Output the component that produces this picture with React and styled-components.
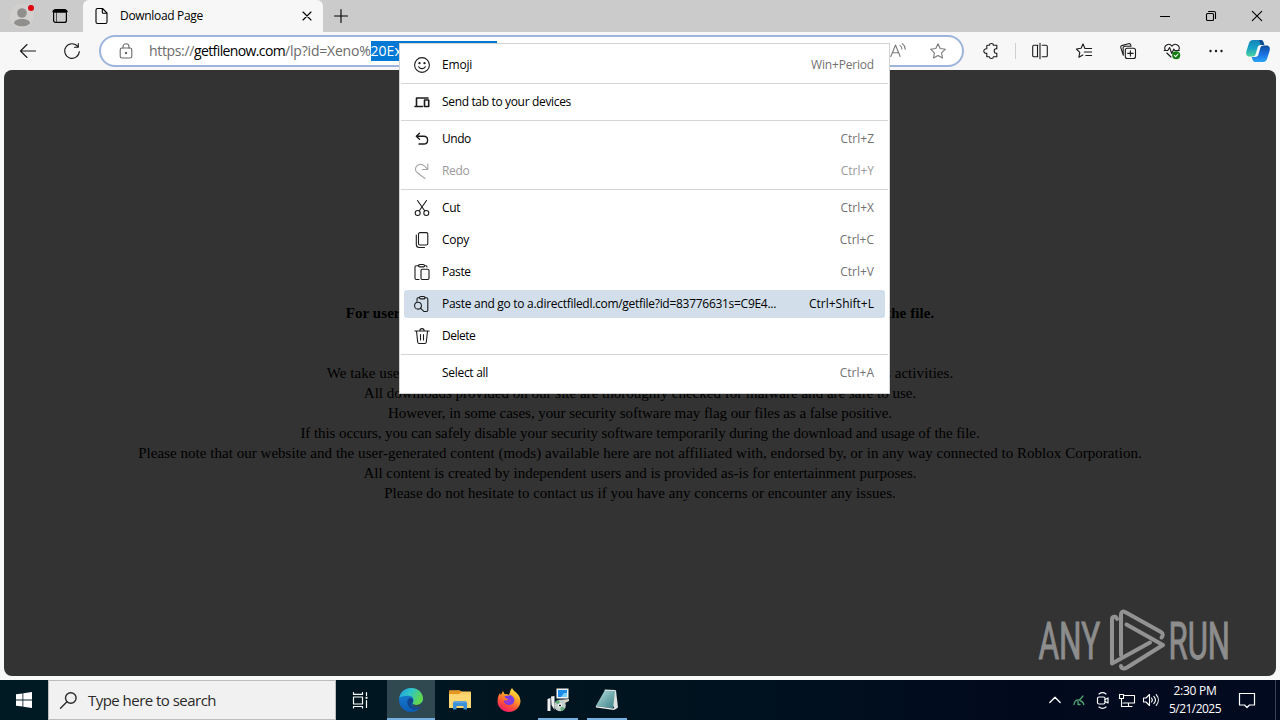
import React from 'react';
import styled, { createGlobalStyle, css } from 'styled-components';

const GlobalStyle = createGlobalStyle`
  * { box-sizing: border-box; }
  body {
    margin: 0;
    width: 1280px;
    height: 720px;
    overflow: hidden;
    font-family: "Open Sans", "Noto Sans", sans-serif;
    font-size: 12px;
    color: #000;
  }
`;

const Desktop = styled.div`
  display: flex;
  flex-direction: column;
  width: 1280px;
  height: 720px;
  background: #f7f8f8;
  overflow: hidden;
  position: relative;
`;

/* ---------- icons ---------- */
const Svg = styled.svg`
  display: block;
  flex: none;
  fill: none;
  stroke: currentColor;
  stroke-width: ${p => p.$w || 1.1};
  stroke-linecap: round;
  stroke-linejoin: round;
  overflow: visible;
`;

const Icon = ({ size = 16, w, children }) => (
  <Svg width={size} height={size} viewBox={`0 0 ${size} ${size}`} $w={w}>{children}</Svg>
);

const ProfileIcon = () => (
  <Svg width="24" height="24" viewBox="0 0 24 24" stroke="none">
    <circle cx="12" cy="12" r="12" fill="#d2d0ce" stroke="none" />
    <circle cx="12" cy="9" r="4.8" fill="#918f8d" stroke="none" />
    <path d="M4 19.500c0-3 3-4.500 8-4.500s8 1.500 8 4.500c-2 2.200-5 2.800-8 2.800s-6-.6-8-2.800z" fill="#918f8d" stroke="none" />
    <circle cx="21" cy="4" r="3" fill="#e0000f" stroke="none" />
  </Svg>
);
const TabActionsIcon = () => (
  <Icon size={14} w={1.2}>
    <rect x=".6" y=".6" width="12.800" height="12.800" rx="2" />
    <path d="M1 2.300h12" strokeWidth="3" />
    <path d="M3.500 4v9" strokeWidth="1" opacity=".6" />
  </Icon>
);
const PageIcon = () => (
  <Icon size={16}>
    <path d="M3.500.5h5l4.500 4.500v9c0 .8-.5 1.500-1.500 1.500h-8C2.500 15.500 2 15 2 14V2C2 1 2.500.5 3.500.5zM8.300.8v3.400c0 .7.400 1 1 1h3.500" />
  </Icon>
);
const BackIcon = () => <Icon><path d="M15.500 8H.5M7 1.500L.5 8 7 14.500" /></Icon>;
const ReloadIcon = () => <Icon><path d="M13.800 3.600A7.300 7.300 0 1 0 15.300 8.500M14.300.6v3.600h-3.800" /></Icon>;
const LockIcon = () => (
  <Icon><rect x="2.200" y="5" width="11.600" height="10" rx="1.800" /><path d="M5 5V3.800a3 3 0 0 1 6 0V5" /><circle cx="8" cy="10" r=".7" fill="currentColor" /></Icon>
);
const ReadAloudIcon = () => (
  <Icon><path d="M.8 13.500L5.500 2l4.700 11.500M2.300 9.800h6.400M10 2.400c1.200.8 1.800 2 1.900 3.500M12.300.6c1.900 1.300 2.800 3.300 2.900 5.700" /></Icon>
);
const StarIcon = () => (
  <Icon><path d="M8 .8l2.200 4.700 5.200.7-3.800 3.600.9 5.200L8 12.500 3.500 15l.9-5.200L.6 6.200l5.200-.7z" /></Icon>
);
const ExtensionIcon = () => (
  <Icon><path d="M4.500 2.300h1.900c0-2.500 4-2.500 4 0h3.400v3.500h-.8c-2.400 0-2.400 4.400 0 4.400h.8v3.500h-3.400c0 2.400-4 2.400-4 0H3.800v-3.300c-4 .3-4-5 0-4.700V3c0-.5.3-.7.700-.7z" /></Icon>
);
const SplitIcon = () => (
  <Icon><path d="M5.800 2.200H2c-.8 0-1.300.5-1.300 1.300v9c0 .8.500 1.300 1.300 1.300h3.800M10.200 2.200H14c.8 0 1.300.5 1.300 1.300v9c0 .8-.5 1.300-1.300 1.300h-3.800M8 .3v15.400M5.500 2.200v11.600" /></Icon>
);
const FavoritesIcon = () => (
  <Icon><path d="M8.900 5.500L7 .9 5.100 5.300.4 6l3.400 3.400-.9 4.800L6.800 12M8.900 5.500H15.600M8.300 9h7.300M9.800 12.500h5.800" /></Icon>
);
const CollectionsIcon = () => (
  <Icon><rect x="5.300" y="5.300" width="10.200" height="10.200" rx="2" /><path d="M10.400 7.700v5.400M7.700 10.400h5.400M3.300 12.300L.8 4.700c-.3-1 .1-1.800 1-2.100L8.500.7c1-.3 1.800.1 2.100 1L11 3.200H5.200C3.800 3.200 3.100 4 3.100 5.200z" /></Icon>
);
const HealthIcon = () => (
  <Icon>
    <path d="M1.200 7C-.8 2.500 5-.8 8 3.200 11-.8 16.800 2.500 14.800 7M2.800 10L7 14M.2 7.500h3.600l1.800-3 2.200 6 2-4.500 1 1.500h4.500" />
    <circle cx="12.200" cy="12.200" r="4" fill="#107c10" stroke="none" />
    <path d="M10.300 12.300l1.400 1.300 2.400-2.600" stroke="#fff" />
  </Icon>
);
const DotsIcon = () => (
  <Icon><g fill="currentColor" stroke="none"><circle cx="2.500" cy="8" r="1.200" /><circle cx="8" cy="8" r="1.200" /><circle cx="13.500" cy="8" r="1.200" /></g></Icon>
);
const CopilotIcon = () => (
  <Svg width="24" height="24" viewBox="0 0 24 24">
    <defs>
      <linearGradient id="cpA" x1="0" y1="0" x2="0" y2="1"><stop offset="0" stopColor="#1384b8" /><stop offset=".5" stopColor="#17a2c8" /><stop offset="1" stopColor="#4fd39a" /></linearGradient>
      <linearGradient id="cpB" x1="0" y1="0" x2="0" y2="1"><stop offset="0" stopColor="#0e4e9c" /><stop offset=".5" stopColor="#1b6fe0" /><stop offset="1" stopColor="#29a5f7" /></linearGradient>
    </defs>
    <path d="M7 1h8c1.500 0 2 1 2.500 2.500l.8 2.500h-3.500c-2 0-2.800 1-3.300 2.700L9.700 15C9.200 16.800 8 17.500 6.300 17.500H3.500C.5 17.500-.3 15 .3 12.500L3 4C3.700 2 5 1 7 1z" fill="url(#cpA)" stroke="none" />
    <path d="M17 23H9c-1.500 0-2-1-2.500-2.500L5.700 18h3.500c2 0 2.800-1 3.300-2.700L14.300 9c.5-1.800 1.700-2.500 3.400-2.500h2.800c3 0 3.800 2.500 3.200 5L21 20c-.7 2-2 3-4 3z" fill="url(#cpB)" stroke="none" />
    <path d="M13 1h2c1.500 0 2 1 2.500 2.500l.8 2.500h-3.500z" fill="#0d4a91" stroke="none" />
  </Svg>
);

/* ---------- title bar ---------- */
const TitleBar = styled.header`
  display: flex;
  height: 32px;
  background: #cbcbcb;
`;
const TitleCell = styled.div`
  display: flex;
  align-items: center;
  justify-content: center;
  width: ${p => p.$width}px;
`;
const Tab = styled.div`
  display: flex;
  align-items: center;
  width: 240px;
  padding: 0 9px 0 11px;
  background: #f7f7f7;
  border-radius: 6px 6px 0 0;
`;
const TabTitle = styled.span`
  flex: 1;
  padding-left: 10px;
  line-height: 16px;
  letter-spacing: -0.32px;
`;
const Spacer = styled.div`flex: 1;`;

/* ---------- toolbar ---------- */
const Toolbar = styled.div`
  display: flex;
  align-items: center;
  height: 38px;
  padding-left: 6px;
  background: #f7f7f7;
`;
const ToolCell = styled.div`
  display: flex;
  align-items: center;
  justify-content: center;
  width: ${p => p.$width || 44}px;
  height: 32px;
  color: #1b1b1b;
`;
const ToolDivider = styled.div`
  width: 1px;
  height: 16px;
  margin: 0 2px;
  background: #cfcfcf;
`;
const AddressBar = styled.div`
  display: flex;
  align-items: center;
  width: 865px;
  height: 32px;
  margin-left: 5px;
  border: 2px solid #9db4dc;
  border-radius: 16px;
  background: #fff;
  color: #6b6b6b;
`;
const AddressIcon = styled.div`
  display: flex;
  justify-content: center;
  width: ${p => p.$width}px;
  padding-left: ${p => p.$inset || 0}px;
  color: ${p => p.$color};
`;
const Url = styled.div`
  flex: 1;
  display: flex;
  font-size: 14px;
  line-height: 20px;
  white-space: pre;
`;
const UrlPart = styled.span`
  letter-spacing: ${p => p.$ls}px;
  color: ${p => p.$strong ? '#000' : '#6b6b6b'};
`;
const UrlSelection = styled.span`
  width: 126px;
  overflow: hidden;
  background: #0078d4;
  color: #fff;
`;

/* ---------- web page ---------- */
const Page = styled.main`
  display: flex;
  flex-direction: column;
  align-items: center;
  height: 606px;
  margin: 0 4px;
  padding-top: 233px;
  border-radius: 8px;
  background: #333;
  font-family: "Liberation Serif", "Times New Roman", serif;
  font-size: 15px;
  line-height: 20px;
  white-space: nowrap;
  position: relative;
`;
const Heading = styled.h3`
  margin: 0 0 40px;
  font-size: 15px;
  line-height: 20px;
  letter-spacing: ${p => p.$ls}px;
`;
const Line = styled.p`
  margin: 0;
  letter-spacing: ${p => p.$ls}px;
`;
const Watermark = styled.svg`
  position: absolute;
  left: 1030px;
  top: 536px;
  fill: none;
`;

/* ---------- context menu ---------- */
const Menu = styled.div`
  display: flex;
  flex-direction: column;
  position: absolute;
  left: 399px;
  top: 43px;
  width: 491px;
  height: 351px;
  padding-top: 5px;
  border: 1px solid #d2d2d2;
  background: #fff;
`;
const Separator = styled.div`
  height: 1px;
  margin: 2px 1px;
  background: #d5d5d5;
`;
const MenuItem = styled.div`
  display: flex;
  align-items: center;
  height: 28px;
  margin: 2px 4px;
  padding: 0 11px 0 10px;
  border-radius: 3px;
  color: ${p => (p.$disabled ? '#9a9a9a' : '#000')};
  ${p => p.$active && css`background: #d2dfeb;`}
`;
const MenuIcon = styled.span`
  width: 16px;
  height: 16px;
  margin-right: 12px;
  color: ${p => (p.$disabled ? '#a6a6a6' : '#1c1c1c')};
`;
const MenuLabel = styled.span`
  flex: 1;
  line-height: 16px;
  letter-spacing: ${p => p.$ls || -0.3}px;
  white-space: nowrap;
`;
const Shortcut = styled.span`
  line-height: 16px;
  letter-spacing: ${p => p.$ls || 0}px;
  color: ${p => (p.$active ? '#000' : p.$disabled ? '#9a9a9a' : '#717171')};
`;

const menuGroups = [
  [{ label: 'Emoji', keys: 'Win+Period', kls: -0.18, ls: -0.2, icon: <Icon><circle cx="8" cy="8" r="7.400" /><path d="M4.700 9.700c1.500 2.600 5.100 2.600 6.600 0" /><circle cx="5.500" cy="6.200" r=".6" fill="currentColor" /><circle cx="10.500" cy="6.200" r=".6" fill="currentColor" /></Icon> }],
  [{ label: 'Send tab to your devices', ls: -0.34, icon: <Icon w={1.6}><path d="M2.500 11.500V4h11.500M1 12.500h7.500M10.500 6h4.200v6.500h-4.200z" /></Icon> }],
  [
    { label: 'Undo', keys: 'Ctrl+Z', ls: -0.45, icon: <Icon w={1.4}><path d="M5.500 2.300L2.300 5.300l3.200 3M2.500 5.300h7.200c5.200 0 5.200 7.700 0 7.700H5" /></Icon> },
    { label: 'Redo', keys: 'Ctrl+Y', disabled: true, icon: <Icon><path d="M13.800 1v5.500H8.300M13.500 6.200C10.500 2.500 6.500-.5 3 2.700 0 6 1.800 8.500 4 10.200l7 5.300" /></Icon> },
  ],
  [
    { label: 'Cut', keys: 'Ctrl+X', icon: <Icon><circle cx="3.700" cy="13" r="2.500" /><circle cx="12.300" cy="13" r="2.500" /><path d="M3.500.5l7.200 10.300M12.500.5l-7.200 10.300" /></Icon> },
    { label: 'Copy', keys: 'Ctrl+C', icon: <Icon><rect x="4.500" y=".6" width="9.300" height="12.400" rx="1.500" /><path d="M2.300 3v9.500c0 2 1 3 3 3h5.200" /></Icon> },
    { label: 'Paste', keys: 'Ctrl+V', ls: -0.4, icon: <Icon><path d="M5 1.800H2.200C1.400 1.800 1 2.300 1 3v11.300c0 .8.500 1.200 1.200 1.200H5M10.500 1.800H12c.7 0 1 .5 1 1.200" /><rect x="4.500" y=".5" width="6" height="2.400" rx="1.200" /><rect x="7" y="5.300" width="8" height="10.200" rx="1.200" /></Icon> },
    { label: 'Paste and go to a.directfiledl.com/getfile?id=83776631s=C9E4...', keys: 'Ctrl+Shift+L', active: true, ls: -0.286, icon: <Icon><path d="M5.500 1.800H4C3.300 1.800 3 2.300 3 3v2.300M10.500 1.800H12.500c.8 0 1.300.5 1.300 1.200v11.300c0 .8-.5 1.200-1.300 1.200H10" /><rect x="5.500" y=".5" width="5.500" height="2.400" rx="1.200" /><circle cx="4" cy="9.700" r="3.400" /><path d="M6.500 12.200l3 3" /></Icon> },
    { label: 'Delete', ls: -0.5, icon: <Icon><path d="M.8 3h14.400M2.500 3l1.200 11c.1 1 .7 1.500 1.500 1.500h5.600c.8 0 1.400-.5 1.500-1.500l1.200-11M5.800 3c0-3.200 4.400-3.200 4.400 0M6.500 6.500v5.500M9.500 6.500v5.500" /></Icon> },
  ],
  [{ label: 'Select all', keys: 'Ctrl+A' , icon: null }],
];

/* ---------- taskbar ---------- */
const Taskbar = styled.footer`
  display: flex;
  height: 40px;
  margin-top: 4px;
  background: linear-gradient(90deg, #001a23 0%, #00141f 50%, #010a1d 80%, #020a20 100%);
  color: #fff;
`;
const TaskCell = styled.div`
  display: flex;
  align-items: center;
  justify-content: center;
  width: ${p => p.$width}px;
  height: 40px;
`;
const TaskView = styled(TaskCell)`
  margin-right: 4px;
`;
const AppCell = styled(TaskCell)`
  width: 48px;
  margin-right: 1px;
  background: ${p => (p.$active ? '#30484f' : 'none')};
  flex-direction: column;
  justify-content: flex-end;
`;
const AppArt = styled.div`
  flex: 1;
  display: flex;
  align-items: center;
  padding-top: ${p => (p.$idle ? 0 : 2)}px;
`;
const RunningBar = styled.div`
  height: 2px;
  width: ${p => (p.$active ? 48 : 40)}px;
  background: #76b0e0;
`;
const SearchBox = styled.div`
  display: flex;
  align-items: center;
  width: 288px;
  border: 1px solid #bdbdbd;
  background: #f1f1f1;
  padding-left: 11px;
  color: #2a2a2a;
`;
const SearchText = styled.span`
  margin-left: 11px;
  font-size: 15px;
  line-height: 20px;
  letter-spacing: -0.53px;
`;
const Clock = styled.div`
  width: 64px;
  display: flex;
  flex-direction: column;
  align-items: center;
  padding-top: 2px;
  line-height: 18px;
`;
const ClockText = styled.span`letter-spacing: ${p => p.$ls}px;`;
const TrayEdge = styled.div`
  width: 1px;
  margin: 0 4px 0 8px;
  background: #3a4258;
`;

const WindowsLogo = () => (
  <Svg width="16" height="16" viewBox="0 0 16 16"><path d="M0 2.300L6.500 1.400v6.200H0zM7.300 1.300L16 0v7.600H7.300zM0 8.400h6.500v6.200L0 13.700zM7.300 8.400H16V16l-8.700-1.300z" fill="#fff" stroke="none" /></Svg>
);
const EdgeLogo = () => (
  <Svg width="24" height="24" viewBox="0 0 24 24">
    <defs>
      <linearGradient id="eg1" x1="0" y1="0" x2="1" y2=".4"><stop offset="0" stopColor="#1c9fe0" /><stop offset=".5" stopColor="#2fc5c6" /><stop offset="1" stopColor="#62d84d" /></linearGradient>
      <linearGradient id="eg2" x1="0" y1="0" x2="0" y2="1"><stop offset="0" stopColor="#1a86d4" /><stop offset="1" stopColor="#0c5cb5" /></linearGradient>
    </defs>
    <g stroke="none">
      <circle cx="12" cy="12" r="12" fill="url(#eg2)" />
      <path d="M.3 10C1.500 3.500 6.500 0 12 0c7 0 12 4.800 12 10.500 0 4-3 6.500-6.700 6.500-3 0-4.300-1.400-3.500-2.600 1.700-2.500.5-6.700-4.300-6.700C5.500 7.700 1.500 8.500.3 10z" fill="url(#eg1)" />
      <path d="M9 11c-2.500 5 1.500 11.500 8.500 10.600 2-.4 3.500-1.600 4.600-3-7 3.200-12.500-1.600-8.300-4.200C15 12 13 8 9 11z" fill="#12478f" />
      <path d="M13.800 14.400c-.8 1.200.5 2.600 3.500 2.600 2.700 0 5-1.300 6-3.500l1 1c-.3 1.500-.8 2.900-2 4.100-4.500 2-10.700.5-8.500-4.200z" fill="#30484f" />
    </g>
  </Svg>
);
const ExplorerLogo = () => (
  <Svg width="22" height="20" viewBox="0 0 22 20">
    <g stroke="none">
      <path d="M0 1.500C0 1 .5.5 1 .5h9.500l2 1H21c.6 0 1 .4 1 1V18H0z" fill="#fbd065" />
      <path d="M0 1.500C0 1 .5.5 1 .5h9.500l2 1-2 2.500H0z" fill="#e59622" />
      <path d="M0 4.500h22v13.500H0z" fill="#fcd772" />
      <path d="M4 19.500v-6c0-1.500 1-2.500 2.500-2.500h9c1.500 0 2.500 1 2.500 2.500v6h-3.500V16h-7v3.500z" fill="#3b8fd4" />
      <path d="M5.500 11h11l1.500 2H4z" fill="#5aa3dc" />
    </g>
  </Svg>
);
const FirefoxLogo = () => (
  <Svg width="24" height="24" viewBox="0 0 24 24">
    <defs>
      <linearGradient id="ff" x1=".8" y1="0" x2=".3" y2="1"><stop offset="0" stopColor="#fff04a" /><stop offset=".4" stopColor="#ffa028" /><stop offset=".7" stopColor="#ff5038" /><stop offset="1" stopColor="#f0186c" /></linearGradient>
    </defs>
    <g stroke="none">
      <path d="M15 0c1 2.500 4 4 5.500 6 1.500 1 3 4.500 3 7.500C23 19.500 18 24 12 24S.5 19.500.5 13c0-3 1-6 2.500-8l.8 2L6 3l1.500 3c2 0 3.500.2 4.500 1 1-2 1-5 3-7z" fill="url(#ff)" />
      <path d="M7.500 8.500c1.500-1.500 3.500 0 5.500-1.500 3 1 5 3.500 4.200 6.500-1 2.800-4.200 4.300-6.700 3.300-3-1-4-3-3.500-4.500 1.500.7 3.200.4 4.500-1-1.500-.5-3-.8-4-2.800z" fill="#7a3be0" />
      <path d="M7 12.800c1.500 1 2.700.8 4.500-.8 1-.6 2-.5 2.700.3-1 3-5.200 3.700-7.200.5z" fill="#a834cc" />
    </g>
  </Svg>
);
const InstallerLogo = () => (
  <Svg width="24" height="24" viewBox="0 0 24 24">
    <rect x="10.500" y=".5" width="12" height="10" fill="#f4f4f4" stroke="none" />
    <rect x="12" y="2" width="9" height="7" fill="#1f8be8" stroke="none" />
    <path d="M15 9l3-4h3v4z" fill="#7ad0ff" stroke="none" />
    <path d="M1.500 11l3-1v13h-3zM5 8.500l3.500-.5v14l-3-5z" fill="#f0f0f0" stroke="none" />
    <path d="M12 12l11-1v2l-6 3z" fill="#d8d2c8" stroke="none" />
    <circle cx="14" cy="17.500" r="5.800" fill="#c3cfca" stroke="none" />
    <path d="M14 17.500L9 14.500a6 6 0 0 1 4-2.800zM14 17.500l5 3a6 6 0 0 1-4 2.800z" fill="#64a87c" stroke="none" />
    <circle cx="14" cy="17.500" r="1.600" fill="#0b1a22" stroke="#fff" />
  </Svg>
);
const NotesLogo = () => (
  <Svg width="24" height="24" viewBox="0 0 24 24">
    <defs><linearGradient id="nt" x1="0" y1="0" x2="1" y2="1"><stop offset="0" stopColor="#c2e5e4" /><stop offset=".5" stopColor="#78b0b2" /><stop offset="1" stopColor="#3c7f88" /></linearGradient></defs>
    <path d="M10 2l11 .5 2 17-3 2z" fill="#dde2e1" stroke="none" />
    <path d="M10 2l10 1-2 17.500L.8 18z" fill="url(#nt)" stroke="none" />
    <path d="M.8 18L18 20.500l4-1-3 2.500L1 19.500z" fill="#e8eeee" stroke="none" />
    <path d="M10 2l10 .5" stroke="#e6eeee" />
  </Svg>
);

const tools = [SplitIcon, FavoritesIcon, CollectionsIcon, HealthIcon, DotsIcon];
const apps = [
  { Art: EdgeLogo, active: true, running: true },
  { Art: ExplorerLogo },
  { Art: FirefoxLogo },
  { Art: InstallerLogo, running: true },
  { Art: NotesLogo, running: true },
];
const notice = [
  ['We take user safety very seriously and do not engage in any harmful, malicious or dangerous activities.', 0.07],
  ['All downloads provided on our site are thoroughly checked for malware and are safe to use.', 0.01],
  ['However, in some cases, your security software may flag our files as a false positive.', -0.065],
  ['If this occurs, you can safely disable your security software temporarily during the download and usage of the file.', -0.07],
  ['Please note that our website and the user-generated content (mods) available here are not affiliated with, endorsed by, or in any way connected to Roblox Corporation.', 0.033],
  ['All content is created by independent users and is provided as-is for entertainment purposes.', -0.01],
  ['Please do not hesitate to contact us if you have any concerns or encounter any issues.', 0.01],
];

export default function App() {
  return (
    <Desktop>
      <GlobalStyle />
      <TitleBar>
        <TitleCell $width={44}><ProfileIcon /></TitleCell>
        <TitleCell $width={32}><TabActionsIcon /></TitleCell>
        <TitleCell $width={7} />
        <Tab>
          <PageIcon />
          <TabTitle>Download Page</TabTitle>
          <Icon size={14}><path d="M3 3l8 8M11 3l-8 8" /></Icon>
        </Tab>
        <TitleCell $width={35}><Icon size={14}><path d="M7 .5v13M.5 7h13" /></Icon></TitleCell>
        <Spacer />
        <TitleCell $width={46}><Icon size={10}><path d="M.5 5.500h9" /></Icon></TitleCell>
        <TitleCell $width={46}><Icon size={10}><rect x=".5" y="2.500" width="7" height="7" rx="1" /><path d="M2.500.5h5.500c1 0 1.500.6 1.500 1.500v5.500" /></Icon></TitleCell>
        <TitleCell $width={46}><Icon size={10}><path d="M.3.3l9.400 9.400M9.700.3L.3 9.700" /></Icon></TitleCell>
      </TitleBar>

      <Toolbar>
        <ToolCell><BackIcon /></ToolCell>
        <ToolCell><ReloadIcon /></ToolCell>
        <AddressBar>
          <AddressIcon $width={48} $inset={2} $color="#6a6a6a"><LockIcon /></AddressIcon>
          <Url>
            <UrlPart $ls={-0.34}>https://</UrlPart>
            <UrlPart $ls={-0.62} $strong>getfilenow.com</UrlPart>
            <UrlPart $ls={-0.2}>/lp?id=Xeno%</UrlPart>
            <UrlSelection>20Executor</UrlSelection>
          </Url>
          <AddressIcon $width={40} $color="#7a7a7a"><ReadAloudIcon /></AddressIcon>
          <AddressIcon $width={40} $color="#7a7a7a"><StarIcon /></AddressIcon>
          <AddressIcon $width={4} />
        </AddressBar>
        <ToolCell $width={5} />
        <ToolCell><ExtensionIcon /></ToolCell>
        <ToolDivider />
        {tools.map((Tool, i) => <ToolCell key={i}><Tool /></ToolCell>)}
        <ToolCell $width={40}><CopilotIcon /></ToolCell>
      </Toolbar>

      <Page>
        <Heading $ls={0.07}>For user safety, please copy the link manually and open it in a new tab to download the file.</Heading>
        {notice.map(([text, ls]) => <Line key={text} $ls={ls}>{text}</Line>)}
        <Watermark width="240" height="70" viewBox="0 0 240 70">
          <g fill="#8d8d8d" stroke="#8d8d8d" strokeWidth="1" fontFamily="Roboto, sans-serif" fontSize="51">
            <text transform="translate(4.500 52.500) scale(.62 1)">ANY</text>
            <text transform="translate(134.500 52.500) scale(.61 1)">RUN</text>
          </g>
          <g stroke="#929292" strokeWidth="4" strokeLinecap="round" strokeLinejoin="round">
            <path d="M83 13c-1-3.500-5-2.500-5 .5v44l38-21" />
            <path d="M87 49V8.500c0-3 2-3.500 4.500-2.300L127 26c2.500 1.500 2 4 .5 5.500" />
            <path d="M92.500 18.500L129 39 93 61.500c-3 1.800-6 1-6-1.500" />
          </g>
        </Watermark>
      </Page>

      <Taskbar>
        <TaskCell $width={48}><WindowsLogo /></TaskCell>
        <SearchBox>
          <Icon size={17} w={1.4}><circle cx="10.800" cy="6" r="5.300" /><path d="M7 9.800L.5 16.300" /></Icon>
          <SearchText>Type here to search</SearchText>
        </SearchBox>
        <TaskView $width={47}>
          <Icon w={1.2}><path d="M1.500 5h9v7h-9zM1.500 .5v1.800h9V.5M1.500 16v-1.500h9V16M14.500 .5v3M14.500 8.500v7" /><rect x="13.500" y="4.800" width="2" height="2" fill="#fff" stroke="none" /></Icon>
        </TaskView>
        {apps.map(({ Art, active, running }, i) => (
          <AppCell key={i} $active={active}>
            <AppArt $idle={!running}><Art /></AppArt>
            {running && <RunningBar $active={active} />}
          </AppCell>
        ))}
        <Spacer />
        <TaskCell $width={24}><Icon size={12} w={1.3}><path d="M.8 8.500L6 3.300l5.200 5.200" /></Icon></TaskCell>
        <TaskCell $width={24}><Icon size={12} w={1.3}><g stroke="#4fa873"><path d="M1 10.500c.5-3.500 2.500-5 5.500-4.500M6.500 6L10 2M5 7.500v3M7.500 7c2 .5 3 1.800 3.300 3.700M6 10.500h1" /></g></Icon></TaskCell>
        <TaskCell $width={24}><Icon w={1.200}><rect x="2.500" y="5" width="7.500" height="7" rx="1.500" /><path d="M10 7.500l3-1.500v5l-3-1.500M4 2c2-1.500 5-1.500 7 0M4 15c2 1.500 5 1.500 7 0" /></Icon></TaskCell>
        <TaskCell $width={24}><Icon w={1.100}><path d="M5.500 3.500h10v7.500H4M9.500 11v3.500M6 14.500h7M.5 2.500h4v4h-4zM2.500 6.500v8h3" /></Icon></TaskCell>
        <TaskCell $width={24}><Icon w={1.100}><path d="M.5 6H3l3.500-3.500v11L3 10H.5zM8.500 6c1 1.200 1 2.800 0 4M10.800 4.300c2 2.200 2 5.200 0 7.400M13.200 2.600c2.800 3.200 2.800 7.600 0 10.800" /></Icon></TaskCell>
        <Clock>
          <ClockText $ls={-0.27}>2:30 PM</ClockText>
          <ClockText $ls={-0.54}>5/21/2025</ClockText>
        </Clock>
        <TaskCell $width={40}><Icon w={1.200}><path d="M.5 1.500h15v11.500h-5L8 15.500 5.500 13h-5z" /></Icon></TaskCell>
        <TrayEdge />
      </Taskbar>

      <Menu>
        {menuGroups.map((group, g) => (
          <React.Fragment key={g}>
            {g > 0 && <Separator />}
            {group.map(({ label, keys, icon, active, disabled, ls, kls }) => (
              <MenuItem key={label} $active={active} $disabled={disabled}>
                <MenuIcon $disabled={disabled}>{icon}</MenuIcon>
                <MenuLabel $ls={ls}>{label}</MenuLabel>
                {keys && <Shortcut $active={active} $disabled={disabled} $ls={kls}>{keys}</Shortcut>}
              </MenuItem>
            ))}
          </React.Fragment>
        ))}
      </Menu>
    </Desktop>
  );
}
